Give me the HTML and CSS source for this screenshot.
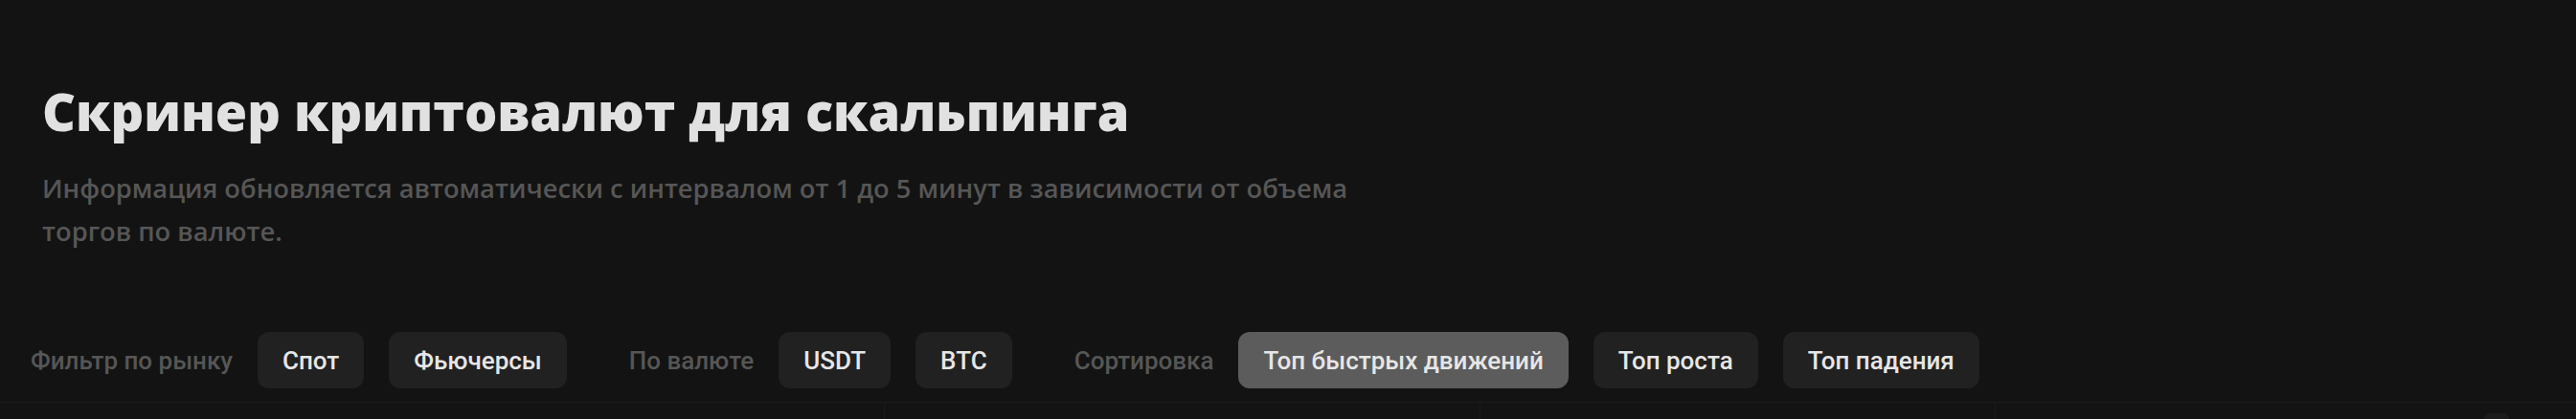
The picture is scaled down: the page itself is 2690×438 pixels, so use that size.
FILE: index.html
```html
<!DOCTYPE html>
<html lang="ru">
<head>
<meta charset="utf-8">
<title>Скринер криптовалют для скальпинга</title>
<link rel="stylesheet" href="styles.css">
</head>
<body>
<div class="page">
  <header class="intro">
    <h1 class="title">Скринер криптовалют для скальпинга</h1>
    <p class="subtitle">Информация обновляется автоматически с интервалом от 1 до 5 минут в зависимости от объема торгов по валюте.</p>
  </header>
  <div class="filters">
    <div class="group">
      <span class="label">Фильтр по рынку</span>
      <button class="chip">Спот</button>
      <button class="chip">Фьючерсы</button>
    </div>
    <div class="group">
      <span class="label">По валюте</span>
      <button class="chip">USDT</button>
      <button class="chip">BTC</button>
    </div>
    <div class="group">
      <span class="label">Сортировка</span>
      <button class="chip active">Топ быстрых движений</button>
      <button class="chip">Топ роста</button>
      <button class="chip">Топ падения</button>
    </div>
  </div>
  <div class="table">
    <div class="col c1"></div>
    <div class="col c2"></div>
    <div class="col c3"></div>
    <div class="col c4"><span class="knob"></span></div>
  </div>
</div>
</body>
</html>
```

FILE: styles.css
```css
html, body {
  margin: 0;
  padding: 0;
  background: #131313;
  height: 100%;
  overflow: hidden;
}
.page {
  font-family: Roboto, "Noto Sans", sans-serif;
  padding-top: 83px;
}
.intro {
  padding-left: 44px;
}
.title {
  margin: 0;
  font-family: "Open Sans", Roboto, sans-serif;
  font-size: 54px;
  line-height: 66px;
  font-weight: 800;
  color: #e1e1e1;
}
.subtitle {
  margin: 25px 0 0;
  max-width: 1380px;
  font-family: "Open Sans", Roboto, sans-serif;
  font-size: 27.3px;
  line-height: 45px;
  font-weight: 600;
  color: #565656;
}
.filters {
  display: flex;
  align-items: center;
  gap: 65px;
  margin-top: 83px;
  padding-left: 32px;
}
.group {
  display: flex;
  align-items: center;
  gap: 26px;
}
.label {
  font-size: 26px;
  font-weight: 500;
  color: #565656;
}
.chip {
  height: 59px;
  padding: 0 26px;
  border: 0;
  border-radius: 12px;
  background: #212121;
  color: #e6e6e6;
  font-family: Roboto, "Noto Sans", sans-serif;
  font-size: 26px;
  font-weight: 500;
}
.chip.active {
  background: #5c5c5c;
}
.table {
  display: flex;
  margin-top: 14px;
  border-top: 1px solid #1c1c1c;
  height: 17px;
}
.col {
  position: relative;
  border-left: 1px solid #1a1a1a;
}
.col:first-child { border-left: 0; }
.c1 { width: 923px; }
.c2 { width: 621px; }
.c3 { width: 537px; }
.c4 { flex: 1; }
.knob {
  position: absolute;
  left: 510px;
  top: 11px;
  width: 26px;
  height: 6px;
  border-radius: 10px 10px 0 0;
  background: #1c1c1c;
}
```
